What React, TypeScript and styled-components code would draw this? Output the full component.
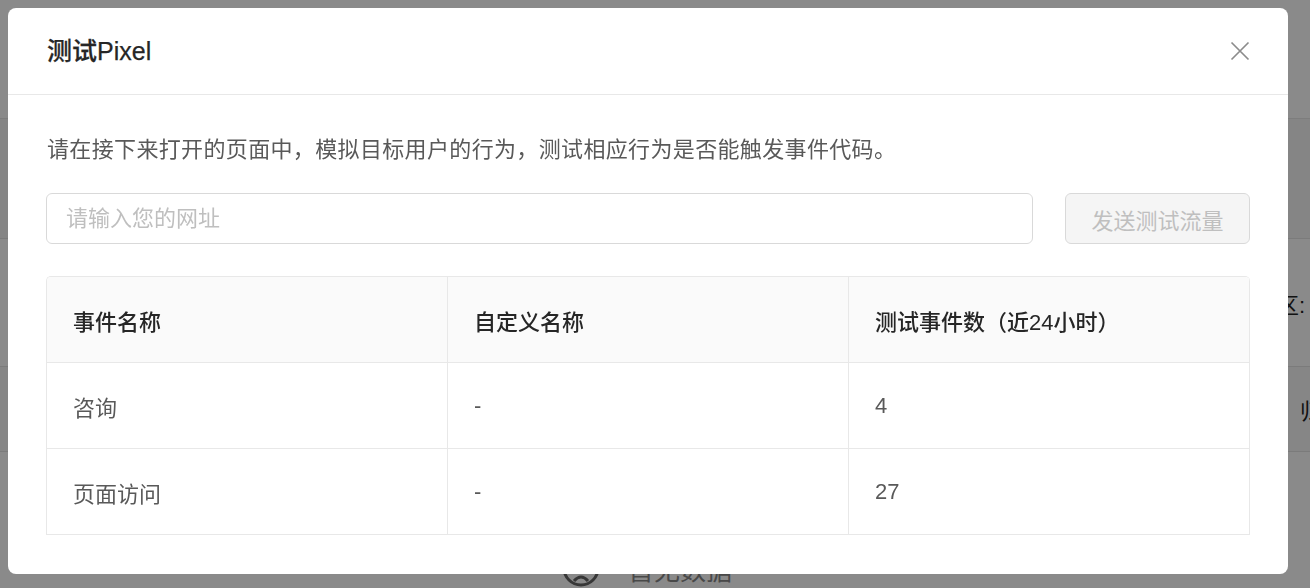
import React from "react";
import styled, { createGlobalStyle } from "styled-components";

const GlobalStyle = createGlobalStyle`
  html, body {
    margin: 0;
    padding: 0;
    background: #ffffff;
    font-family: "Liberation Sans", "Noto Sans CJK SC", sans-serif;
    overflow: hidden;
  }
  * { box-sizing: border-box; }
`;

/* ---------- background page (under the mask) ---------- */
const Page = styled.div`
  width: 1310px;
  height: 588px;
  display: flex;
  flex-direction: column;
  background: #ffffff;
  color: #333;
  font-size: 22px;
`;

const PageTop = styled.div`
  height: 119px;
  border-bottom: 1px solid #e8e8e8;
  background: #ffffff;
`;

const PageBand = styled.div`
  height: 120px;
  background: #f6f6f6;
  border-bottom: 1px solid #e3e3e3;
`;

const PageRow = styled.div<{ $h: number; $bg: string }>`
  height: ${(p) => p.$h}px;
  background: ${(p) => p.$bg};
  border-bottom: 1px solid #e3e3e3;
  display: flex;
  align-items: center;
  justify-content: flex-end;
  white-space: nowrap;
  overflow: hidden;
`;

const PageLabel = styled.span<{ $shift: number }>`
  margin-right: ${(p) => p.$shift}px;
  font-size: 22px;
  color: #222;
`;

const Empty = styled.div`
  flex: 1;
  display: flex;
  align-items: flex-end;
  justify-content: center;
  gap: 28px;
  margin-bottom: 1px;
  padding-right: 16px;
  color: #888;
  font-size: 26px;
  line-height: 32px;
`;

/* ---------- mask & modal ---------- */
const Mask = styled.div`
  position: fixed;
  inset: 0;
  background: rgba(0, 0, 0, 0.46);
`;

const Wrap = styled.div`
  position: fixed;
  inset: 0;
  padding: 8px;
`;

const Modal = styled.div`
  width: 1280px;
  background: #ffffff;
  border-radius: 8px;
  display: flex;
  flex-direction: column;
`;

const Header = styled.div`
  height: 87px;
  padding: 0 38px 0 39px;
  border-bottom: 1px solid #e8e8e8;
  display: flex;
  align-items: center;
  justify-content: space-between;
`;

const Title = styled.div`
  font-size: 25px;
  font-weight: 500;
  color: #262626;
  line-height: 34px;
  -webkit-text-stroke: 0.25px #262626;
`;

const Close = styled.button`
  border: none;
  background: transparent;
  padding: 0;
  width: 20px;
  height: 20px;
  display: flex;
  align-items: center;
  justify-content: center;
  cursor: pointer;
`;

const Body = styled.div`
  padding: 38px 38px 39px 38px;
  display: flex;
  flex-direction: column;
`;

const Desc = styled.p`
  margin: 0 0 26px 1px;
  font-size: 22px;
  line-height: 34px;
  color: #595959;
  letter-spacing: 0.35px;
`;

const InputRow = styled.div`
  display: flex;
  gap: 32px;
  margin-bottom: 32px;
`;

const Input = styled.input`
  flex: 1;
  height: 51px;
  border: 1px solid #d9d9d9;
  border-radius: 6px;
  padding: 0 19px;
  font-family: inherit;
  font-size: 22px;
  color: #262626;
  outline: none;
  &::placeholder {
    color: #bfbfbf;
  }
`;

const SendButton = styled.button`
  width: 185px;
  height: 51px;
  border: 1px solid #d9d9d9;
  border-radius: 6px;
  background: #f5f5f5;
  color: #bfbfbf;
  font-family: inherit;
  font-size: 22px;
  cursor: not-allowed;
  padding: 0;
`;

const Table = styled.div`
  display: grid;
  grid-template-columns: 401px 401px 1fr;
  border-top: 1px solid #e8e8e8;
  border-left: 1px solid #e8e8e8;
  border-radius: 5px 5px 0 0;
  overflow: hidden;
`;

const Cell = styled.div<{ $head?: boolean }>`
  height: 86px;
  display: flex;
  align-items: center;
  padding: 0 26px;
  font-size: 22px;
  border-bottom: 1px solid #e8e8e8;
  border-right: 1px solid #e8e8e8;
  background: ${(p) => (p.$head ? "#fafafa" : "#ffffff")};
  color: ${(p) => (p.$head ? "#262626" : "#595959")};
  font-weight: ${(p) => (p.$head ? 500 : 400)};
`;

const columns = ["事件名称", "自定义名称", "测试事件数（近24小时）"];
const rows = [
  ["咨询", "-", "4"],
  ["页面访问", "-", "27"],
];

const CloseIcon = () => (
  <svg width="20" height="20" viewBox="0 0 20 20">
    <path d="M1.5 1.5 L18.5 18.5 M18.5 1.5 L1.5 18.5" stroke="#8c8c8c" strokeWidth="1.7" fill="none" />
  </svg>
);

const EmptyIcon = () => (
  <svg width="38" height="38" viewBox="0 0 38 38">
    <circle cx="19" cy="19" r="17" stroke="#666" strokeWidth="3" fill="none" />
    <path d="M12 32 Q19 24 26 32" stroke="#666" strokeWidth="3" fill="none" />
  </svg>
);

export default function App() {
  return (
    <>
      <GlobalStyle />
      <Page>
        <PageTop />
        <PageBand />
        <PageRow $h={128} $bg="#ffffff">
          <PageLabel $shift={5}>区:</PageLabel>
        </PageRow>
        <PageRow $h={85} $bg="#f7f7f7">
          <PageLabel $shift={-12}>归</PageLabel>
        </PageRow>
        <Empty>
          <EmptyIcon />
          <span>暂无数据</span>
        </Empty>
      </Page>
      <Mask />
      <Wrap>
        <Modal>
          <Header>
            <Title>测试Pixel</Title>
            <Close aria-label="关闭">
              <CloseIcon />
            </Close>
          </Header>
          <Body>
            <Desc>请在接下来打开的页面中，模拟目标用户的行为，测试相应行为是否能触发事件代码。</Desc>
            <InputRow>
              <Input placeholder="请输入您的网址" />
              <SendButton disabled>发送测试流量</SendButton>
            </InputRow>
            <Table>
              {columns.map((c) => (
                <Cell key={c} $head>
                  {c}
                </Cell>
              ))}
              {rows.map((r, i) =>
                r.map((v, j) => <Cell key={`${i}-${j}`}>{v}</Cell>)
              )}
            </Table>
          </Body>
        </Modal>
      </Wrap>
    </>
  );
}
